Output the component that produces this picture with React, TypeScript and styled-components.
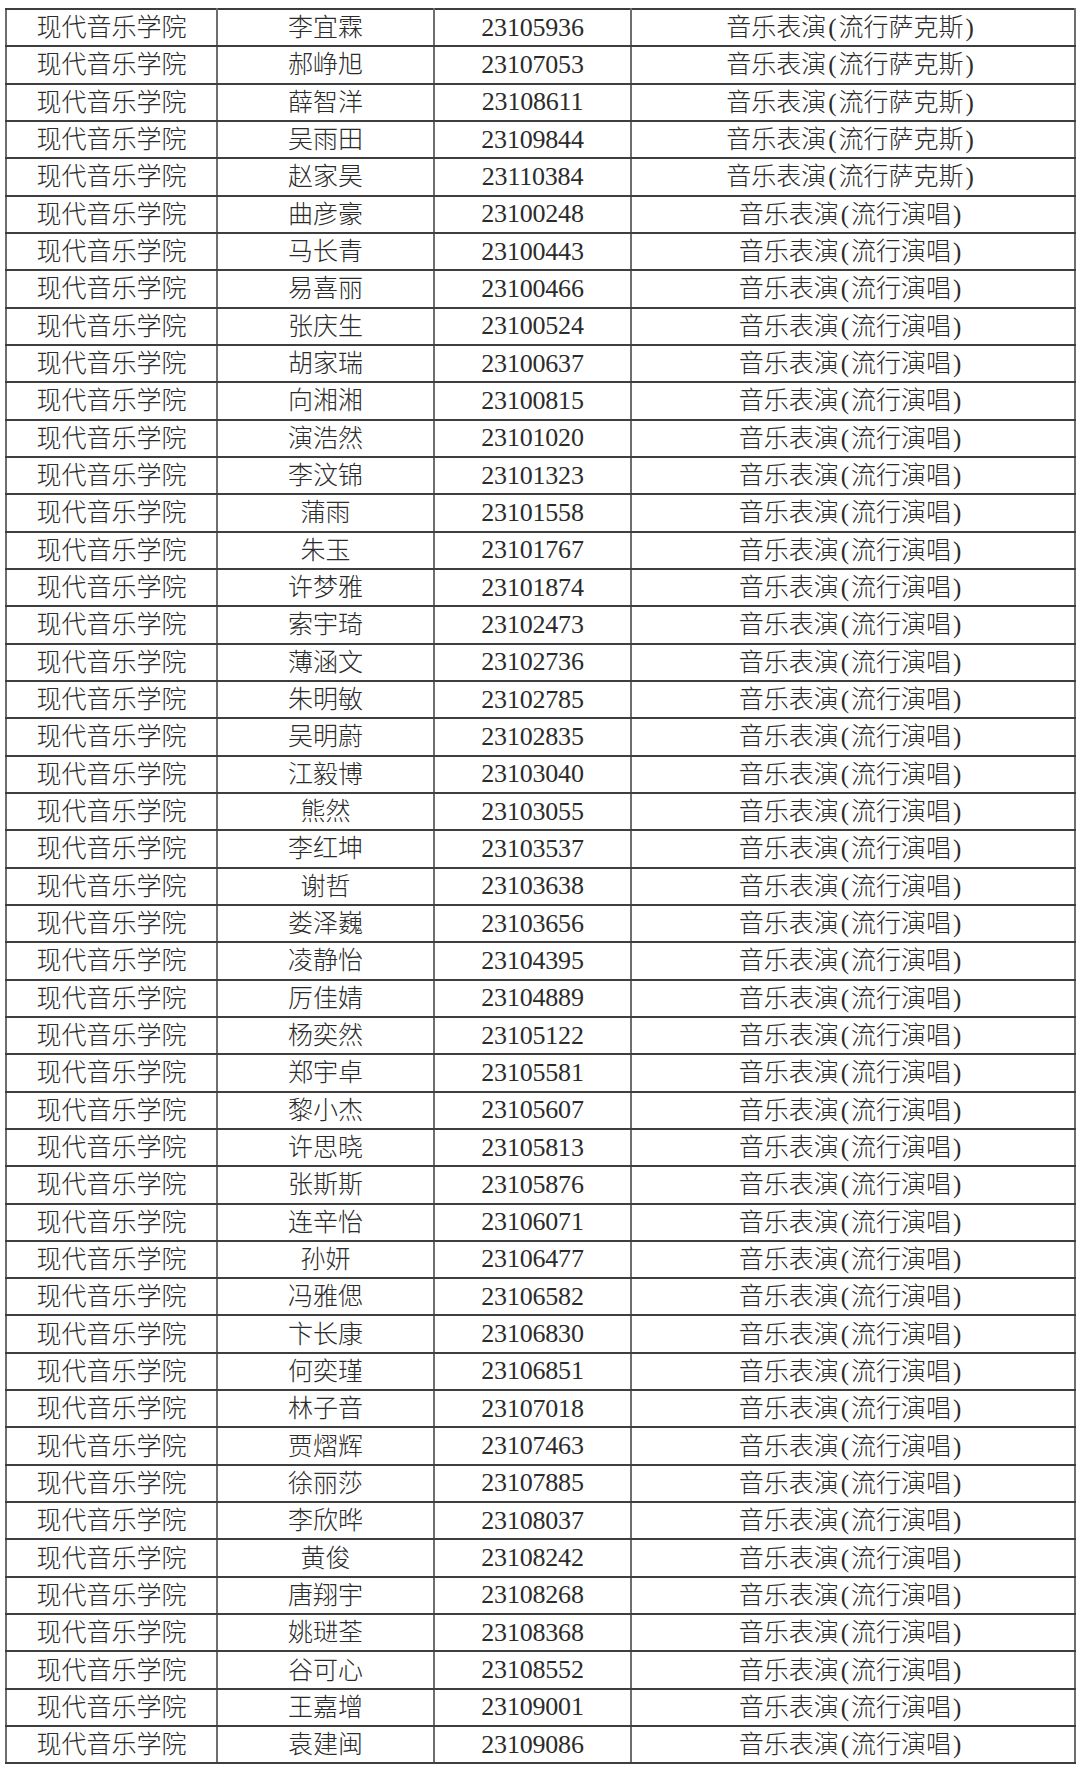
import React from "react";
import styled, { createGlobalStyle } from "styled-components";

const GlobalStyle = createGlobalStyle`
	html, body {
		margin: 0;
		padding: 0;
		background: #ffffff;
	}
	body {
		font-family: "Liberation Serif", "Noto Sans CJK SC", serif;
		color: #2b2b2b;
	}
`;

const Page = styled.div`
	width: 1080px;
	height: 1772px;
	padding: 8px 0 0 5px;
	box-sizing: border-box;
	overflow: hidden;
`;

const Table = styled.table`
	width: 1069px;
	border-collapse: collapse;
	table-layout: fixed;
	border: 2px solid #4a4a4a;
`;

interface ColProps {
	$width: number;
}

const Col = styled.col<ColProps>`
	width: ${(props) => props.$width}px;
`;

const Row = styled.tr`
	height: 37.33px;
`;

const Cell = styled.td`
	padding: 0;
	border-top: 2px solid #3e3e3e;
	border-bottom: 2px solid #3e3e3e;
	border-left: 2px solid #6e6e6e;
	border-right: 2px solid #6e6e6e;
	text-align: center;
	vertical-align: middle;
	font-family: "Liberation Serif", "Noto Sans CJK SC", serif;
	font-size: 25px;
	font-weight: 300;
	line-height: 1;
	white-space: nowrap;
	overflow: hidden;
`;

const NumCell = styled(Cell)`
	font-size: 26px;
	font-weight: 400;
	letter-spacing: -0.2px;
`;

const MajorCell = styled(Cell)`
	padding-right: 4px;
`;

const Paren = styled.span`
	padding: 0 2px;
`;

interface StudentRow {
	name: string;
	id: string;
	major: string;
}

const SAX = "萨克斯";
const SING = "演唱";

const rows: StudentRow[] = [
	{ name: "李宜霖", id: "23105936", major: SAX },
	{ name: "郝峥旭", id: "23107053", major: SAX },
	{ name: "薛智洋", id: "23108611", major: SAX },
	{ name: "吴雨田", id: "23109844", major: SAX },
	{ name: "赵家昊", id: "23110384", major: SAX },
	{ name: "曲彦豪", id: "23100248", major: SING },
	{ name: "马长青", id: "23100443", major: SING },
	{ name: "易喜丽", id: "23100466", major: SING },
	{ name: "张庆生", id: "23100524", major: SING },
	{ name: "胡家瑞", id: "23100637", major: SING },
	{ name: "向湘湘", id: "23100815", major: SING },
	{ name: "演浩然", id: "23101020", major: SING },
	{ name: "李汶锦", id: "23101323", major: SING },
	{ name: "蒲雨", id: "23101558", major: SING },
	{ name: "朱玉", id: "23101767", major: SING },
	{ name: "许梦雅", id: "23101874", major: SING },
	{ name: "索宇琦", id: "23102473", major: SING },
	{ name: "薄涵文", id: "23102736", major: SING },
	{ name: "朱明敏", id: "23102785", major: SING },
	{ name: "吴明蔚", id: "23102835", major: SING },
	{ name: "江毅博", id: "23103040", major: SING },
	{ name: "熊然", id: "23103055", major: SING },
	{ name: "李红坤", id: "23103537", major: SING },
	{ name: "谢哲", id: "23103638", major: SING },
	{ name: "娄泽巍", id: "23103656", major: SING },
	{ name: "凌静怡", id: "23104395", major: SING },
	{ name: "厉佳婧", id: "23104889", major: SING },
	{ name: "杨奕然", id: "23105122", major: SING },
	{ name: "郑宇卓", id: "23105581", major: SING },
	{ name: "黎小杰", id: "23105607", major: SING },
	{ name: "许思晓", id: "23105813", major: SING },
	{ name: "张斯斯", id: "23105876", major: SING },
	{ name: "连辛怡", id: "23106071", major: SING },
	{ name: "孙妍", id: "23106477", major: SING },
	{ name: "冯雅偲", id: "23106582", major: SING },
	{ name: "卞长康", id: "23106830", major: SING },
	{ name: "何奕瑾", id: "23106851", major: SING },
	{ name: "林子音", id: "23107018", major: SING },
	{ name: "贾熠辉", id: "23107463", major: SING },
	{ name: "徐丽莎", id: "23107885", major: SING },
	{ name: "李欣晔", id: "23108037", major: SING },
	{ name: "黄俊", id: "23108242", major: SING },
	{ name: "唐翔宇", id: "23108268", major: SING },
	{ name: "姚琎荃", id: "23108368", major: SING },
	{ name: "谷可心", id: "23108552", major: SING },
	{ name: "王嘉增", id: "23109001", major: SING },
	{ name: "袁建闽", id: "23109086", major: SING },
];

// column widths measured off the scan
const COLS = [211, 217, 197, 444];

function App() {
	return (
		<Page>
			<GlobalStyle />
			<Table>
				<colgroup>
					{COLS.map((w, i) => (
						<Col key={i} $width={w} />
					))}
				</colgroup>
				<tbody>
					{rows.map((row) => (
						<Row key={row.id}>
							<Cell>现代音乐学院</Cell>
							<Cell>{row.name}</Cell>
							<NumCell>{row.id}</NumCell>
							<MajorCell>
								音乐表演<Paren>(</Paren>流行{row.major}
								<Paren>)</Paren>
							</MajorCell>
						</Row>
					))}
				</tbody>
			</Table>
		</Page>
	);
}

export default App;
